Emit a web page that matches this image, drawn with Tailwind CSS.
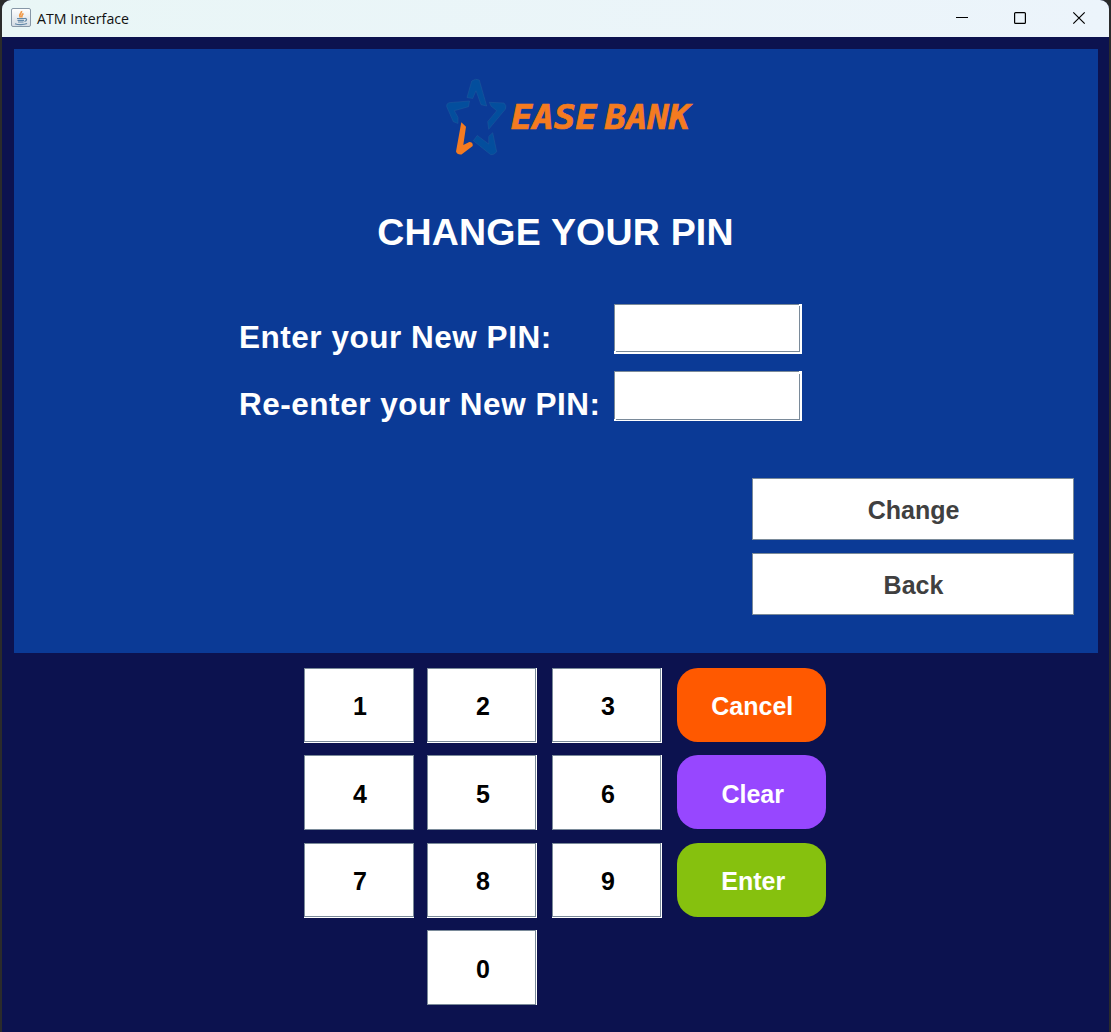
<!DOCTYPE html>
<html lang="en">
<head>
<meta charset="utf-8">
<title>ATM Interface</title>
<script src="https://cdn.jsdelivr.net/npm/@tailwindcss/browser@4"></script>
</head>
<body class="h-[1032px] w-[1111px] overflow-hidden bg-[#2b2b2b] pl-[2px] pr-[2px] font-['Liberation_Sans',sans-serif]">
<div class="flex h-full flex-col overflow-hidden rounded-t-[9px] bg-[#0c124f]">
  <header class="flex h-[37px] shrink-0 items-center bg-linear-to-r from-[#e9f6f6] to-[#ecf4fb] pl-[9px]">
    <svg class="h-5 w-5 -translate-y-px" viewBox="0 0 20 20" fill="none">
      <defs><linearGradient id="g" x2="0" y2="1"><stop stop-color="#fff"/><stop offset="1" stop-color="#d3dbe3"/></linearGradient></defs>
      <rect x=".5" y=".5" width="19" height="18" rx="1.5" fill="url(#g)" stroke="#8797a7"/>
      <path d="M10.500 3C11 5.500 7 6.500 9.500 9.500M12.500 5.500C10 7 11.500 8 10.500 9.500" stroke="#f09a4a" stroke-width="1.700"/>
      <path d="M6 10.500h7.500M6.500 12.300h6.500M7 14h5.500M4 15.700c3 1.300 9 1.200 12-.2M13.500 10.500c3-.5 2.500 2.500 0 3" stroke="#6288a8" stroke-width="1.200"/>
    </svg>
    <h1 class="ml-[6px] font-['Open_Sans',sans-serif] text-[15px] leading-5 text-[#111]"><svg class="block h-5 w-[94px] overflow-visible" fill="currentColor"><text x="0" y="15" textLength="92" lengthAdjust="spacingAndGlyphs">ATM Interface</text></svg></h1>
    <svg class="mr-[22px] ml-auto h-[14px] w-[132px] -translate-y-px" viewBox="0 0 132 14" fill="none" stroke="#000" stroke-width="1.200">
      <path d="M1 6.500h12" stroke-width="1"/>
      <rect x="59.600" y="1.600" width="10.800" height="10.800" rx="1"/>
      <path d="M118.300 1.300l11.400 11.400M129.700 1.300L118.300 12.700"/>
    </svg>
  </header>

  <main class="mt-3 ml-3 h-[604px] w-[1084px] shrink-0 bg-[#0b3a96] pt-[27px]">
    <svg class="ml-[430px] block h-[82px] w-[250px]" viewBox="444 76 250 82">
      <g fill="#034e9d" stroke="#28619d" stroke-width=".4" stroke-linejoin="round">
        <path d="M467 97.500 471.700 81q4-3 7.600-1L486.700 106 481 104.700 476 90.700 472.700 98.500Z"/>
        <path d="M469.500 101 449 102.700q-3 1-2.300 4L453.300 121.700 458 123.500V117.300L454.300 110.700 468.500 106.700Z"/>
        <path d="M489.300 102.300 504 103q3 2.500 1.500 6L488.700 129.300 487.700 121.700 496.700 110.700 491 106Z"/>
        <path d="M473.300 140.700 477.300 135.500 488.700 144V136.500L492.700 132.700 496.700 151.700q-2.500 3.500-6 3Z"/>
      </g>
      <path d="M461.300 122.300 466 126.700 463.300 145 469.300 142q4 0 3.400 4L461.500 154.500q-4.500.5-5.500-3Z" fill="#f47b20"/>
      <g fill="#f47b20" stroke="#f47b20" stroke-width=".7" font-family="DejaVu Sans Mono" font-weight="700" font-style="italic" font-size="33">
        <text x="511" y="128.800" textLength="86" lengthAdjust="spacingAndGlyphs">EASE</text>
        <text x="605" y="128.800" textLength="85" lengthAdjust="spacingAndGlyphs">BANK</text>
      </g>
    </svg>
    <h2 class="mt-[52px] h-11 pr-px text-center text-[37.500px] leading-[44px] font-bold tracking-[0.200px] text-white">CHANGE YOUR PIN</h2>
    <form class="mt-[50px] ml-[225px] grid grid-cols-[375px_188px] gap-y-[17px] text-[31.500px] font-bold text-white">
      <label class="h-[50px] pt-[15px] leading-9 tracking-[0.520px] whitespace-nowrap">Enter your New PIN:</label>
      <div class="relative h-[50px] bg-white"><div class="absolute inset-0 right-[2px] bottom-[2px] border border-[#7a8a99]"></div><div class="absolute top-0 right-0 h-[2px] w-[3px] bg-white"></div><div class="absolute bottom-[2px] left-0 h-px w-[2px] bg-white"></div></div>
      <label class="h-[50px] pt-[15px] leading-9 tracking-[0.520px] whitespace-nowrap">Re-enter your New PIN:</label>
      <div class="relative h-[50px] bg-white"><div class="absolute inset-0 right-[2px] bottom-[1px] border border-[#7a8a99]"></div><div class="absolute top-0 right-0 h-[3px] w-[3px] bg-white"></div><div class="absolute bottom-[1px] left-0 h-px w-[2px] bg-white"></div></div>
    </form>
    <div class="mt-[57px] ml-[738px] flex w-[322px] flex-col gap-[13px] text-[25px] font-bold text-[#404040]">
      <button class="h-[62px] border border-[#7a8a99] bg-white pt-[4px] pl-px">Change</button>
      <button class="h-[62px] border border-[#7a8a99] bg-white pt-[4px] pl-px">Back</button>
    </div>
  </main>

  <section class="mt-[15px] ml-[302px] grid grid-cols-[123px_125px_125px_149px] grid-rows-[87px_88px_87px_75px] text-[25px] font-bold text-black [&>.k]:h-[75px] [&>.k]:w-[110px] [&>.k]:bg-white [&>.k>button]:h-full [&>.k>button]:w-full [&>.k>button]:border [&>.k>button]:border-[#7a8a99]">
    <div class="k pb-px"><button class="pt-[3px] pl-[2px]">1</button></div>
    <div class="k pr-px pb-px"><button class="pt-[3px] pl-[3px]">2</button></div>
    <div class="k pr-px pb-px"><button class="pt-[3px] pl-[3px]">3</button></div>
    <button class="h-[73.500px] w-[148.500px] rounded-[21px] bg-[#ff5900] pt-[3px] pl-[2px] text-white">Cancel</button>
    <div class="k"><button class="pt-[5px] pl-[2px]">4</button></div>
    <div class="k pr-px"><button class="pt-[5px] pl-[3px]">5</button></div>
    <div class="k pr-px"><button class="pt-[5px] pl-[3px]">6</button></div>
    <button class="h-[73.500px] w-[148.500px] rounded-[21px] bg-[#9747ff] pt-[5px] pl-[3px] text-white">Clear</button>
    <div class="k pb-px"><button class="pt-[3px] pl-[2px]">7</button></div>
    <div class="k pr-px pb-px"><button class="pt-[3px] pl-[3px]">8</button></div>
    <div class="k pr-px pb-px"><button class="pt-[3px] pl-[3px]">9</button></div>
    <button class="h-[73.500px] w-[148.500px] rounded-[21px] bg-[#86c10e] pt-[3px] pl-[4px] text-white">Enter</button>
    <div class="k col-start-2 pr-px"><button class="pt-[5px] pl-[3px]">0</button></div>
  </section>
</div>
</body>
</html>
